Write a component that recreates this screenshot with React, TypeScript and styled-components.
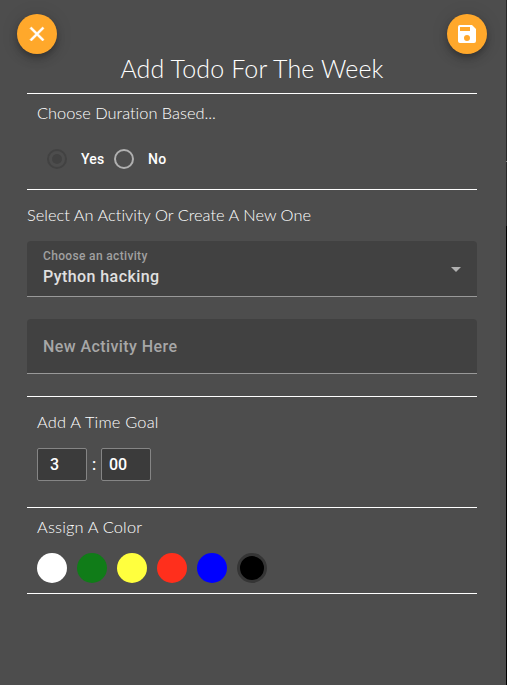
import React from "react";
import styled, { createGlobalStyle } from "styled-components";

const GlobalStyle = createGlobalStyle`
  *, *::before, *::after { box-sizing: border-box; }
  body { margin: 0; background: #4d4d4d; }
  button { border: 0; padding: 0; font: inherit; }
`;

const Page = styled.main`
  display: flex;
  width: 507px;
  height: 685px;
  overflow: hidden;
  background: #4d4d4d;
  color: #fff;
  font-family: Roboto, sans-serif;
  font-weight: 500;
  font-variant-ligatures: none;
`;

const Dialog = styled.div`
  width: 506px;
  padding: 14px 29px 0 27px;
`;

const Edge = styled.div`
  width: 1px;
  background: linear-gradient(#292929 0 161px, #808080 161px 162px, #292929 162px 226px, #000 226px);
`;

const Toolbar = styled.header`
  display: flex;
  justify-content: space-between;
  height: 40px;
  margin: 0 -10px;
`;

const Fab = styled.button`
  display: flex;
  align-items: center;
  justify-content: center;
  width: 40px;
  height: 40px;
  border-radius: 50%;
  background: #ffa82b;
  color: #fff;
  box-shadow: 0 3px 5px -1px rgba(0, 0, 0, 0.2), 0 6px 10px rgba(0, 0, 0, 0.14), 0 1px 18px rgba(0, 0, 0, 0.12);
  svg { width: 24px; height: 24px; fill: currentColor; }
`;

const Title = styled.h1<{ $spacing: number }>`
  height: 40px;
  margin: -1px 0 0;
  font: 300 25px/30px Lato, sans-serif;
  letter-spacing: ${(p) => p.$spacing}px;
  text-align: center;
  white-space: nowrap;
`;

const Section = styled.section<{ $height: number; $top: number; $inset?: boolean }>`
  height: ${(p) => p.$height}px;
  padding: ${(p) => p.$top}px ${(p) => (p.$inset ? 10 : 0)}px 0;
  border-top: 1px solid #fff;
`;

const Heading = styled.h2<{ $spacing: number }>`
  height: 20px;
  margin: 0;
  font: 300 16.4px/20px Lato, sans-serif;
  letter-spacing: ${(p) => p.$spacing}px;
  white-space: nowrap;
`;

const Choices = styled.div`
  display: flex;
  padding: 26px 0 0 10px;
`;

const Choice = styled.label<{ $width: number }>`
  display: flex;
  align-items: center;
  gap: 14px;
  width: ${(p) => p.$width}px;
  height: 20px;
  font-size: 14px;
  line-height: 20px;
  letter-spacing: 0.25px;
`;

const Radio = styled.span<{ $checked?: boolean }>`
  display: flex;
  align-items: center;
  justify-content: center;
  flex: none;
  width: 20px;
  height: 20px;
  border: 2px solid ${(p) => (p.$checked ? "#424242" : "#b0b0b0")};
  border-radius: 50%;
  &::after {
    content: "";
    width: 10px;
    height: 10px;
    border-radius: 50%;
    background: ${(p) => (p.$checked ? "#424242" : "transparent")};
  }
`;

const Field = styled.div<{ $height: number; $top: number }>`
  display: flex;
  align-items: center;
  justify-content: space-between;
  height: ${(p) => p.$height}px;
  margin-top: ${(p) => p.$top}px;
  padding: 0 16px;
  border-bottom: 1px solid #999;
  border-radius: 4px 4px 0 0;
  background: #414141;
`;

const FieldText = styled.div`
  display: flex;
  flex-direction: column;
  gap: 1px;
  padding-bottom: 1px;
`;

const FieldLabel = styled.span`
  font-size: 12px;
  line-height: 17px;
  letter-spacing: 0.34px;
  color: #a0a0a0;
`;

const FieldValue = styled.span`
  font-size: 16px;
  line-height: 22px;
  letter-spacing: 0.42px;
  color: #e0e0e0;
`;

const Placeholder = styled(FieldValue)`
  padding-top: 2px;
  color: #a7a7a7;
`;

const Caret = styled.svg`
  width: 10px;
  height: 5px;
  margin-top: 2px;
  fill: #b0b0b0;
`;

const TimeRow = styled.div`
  display: flex;
  align-items: center;
  margin-top: 16px;
  font-size: 16px;
`;

const TimeBox = styled.div<{ $indent: number }>`
  width: 50px;
  height: 33px;
  padding-left: ${(p) => p.$indent}px;
  border: 1px solid #858585;
  border-radius: 2px;
  background: #3b3b3b;
  line-height: 31px;
`;

const Colon = styled.span`
  width: 14px;
  text-align: center;
`;

const Palette = styled.div`
  display: flex;
  gap: 10px;
  margin-top: 16px;
`;

const Swatch = styled.button<{ $color: string; $selected?: boolean }>`
  width: 30px;
  height: 30px;
  border: ${(p) => (p.$selected ? "3px solid #353535" : "0")};
  border-radius: 50%;
  background: ${(p) => p.$color};
`;

const colors = ["#ffffff", "#107c18", "#ffff3e", "#ff2f1c", "#0000ff", "#000000"];

export default function App() {
  return (
    <Page>
      <GlobalStyle />
      <Dialog>
        <Toolbar>
          <Fab aria-label="Close">
            <svg viewBox="0 0 24 24" stroke="currentColor" strokeWidth="0.6"><path d="M19 6.41 17.59 5 12 10.59 6.41 5 5 6.41 10.59 12 5 17.59 6.41 19 12 13.41 17.59 19 19 17.59 13.41 12z" /></svg>
          </Fab>
          <Fab aria-label="Save">
            <svg viewBox="0 0 24 24"><path d="M17 3H5a2 2 0 0 0-2 2v14a2 2 0 0 0 2 2h14a2 2 0 0 0 2-2V7l-4-4zm-5 16a3 3 0 1 1 0-6 3 3 0 0 1 0 6zm3-10H5V5h10v4z" /></svg>
          </Fab>
        </Toolbar>
        <Title $spacing={0.14}>Add Todo For The Week</Title>
        <Section $height={96} $top={9} $inset>
          <Heading $spacing={-0.01}>Choose Duration Based...</Heading>
          <Choices>
            <Choice $width={67}><Radio $checked />Yes</Choice>
            <Choice $width={60}><Radio />No</Choice>
          </Choices>
        </Section>
        <Section $height={207} $top={15}>
          <Heading $spacing={0.02}>Select An Activity Or Create A New One</Heading>
          <Field $height={56} $top={16}>
            <FieldText>
              <FieldLabel>Choose an activity</FieldLabel>
              <FieldValue>Python hacking</FieldValue>
            </FieldText>
            <Caret viewBox="0 0 10 5"><path d="M0 0h10L5 5z" /></Caret>
          </Field>
          <Field $height={55} $top={22}>
            <Placeholder>New Activity Here</Placeholder>
          </Field>
        </Section>
        <Section $height={111} $top={15} $inset>
          <Heading $spacing={0.2}>Add A Time Goal</Heading>
          <TimeRow>
            <TimeBox $indent={12}>3</TimeBox>
            <Colon>:</Colon>
            <TimeBox $indent={7}>00</TimeBox>
          </TimeRow>
        </Section>
        <Section $height={86} $top={9} $inset>
          <Heading $spacing={0.16}>Assign A Color</Heading>
          <Palette>
            {colors.map((c) => (
              <Swatch key={c} $color={c} $selected={c === "#000000"} aria-label={c} />
            ))}
          </Palette>
        </Section>
        <Section $height={1} $top={0} />
      </Dialog>
      <Edge />
    </Page>
  );
}
